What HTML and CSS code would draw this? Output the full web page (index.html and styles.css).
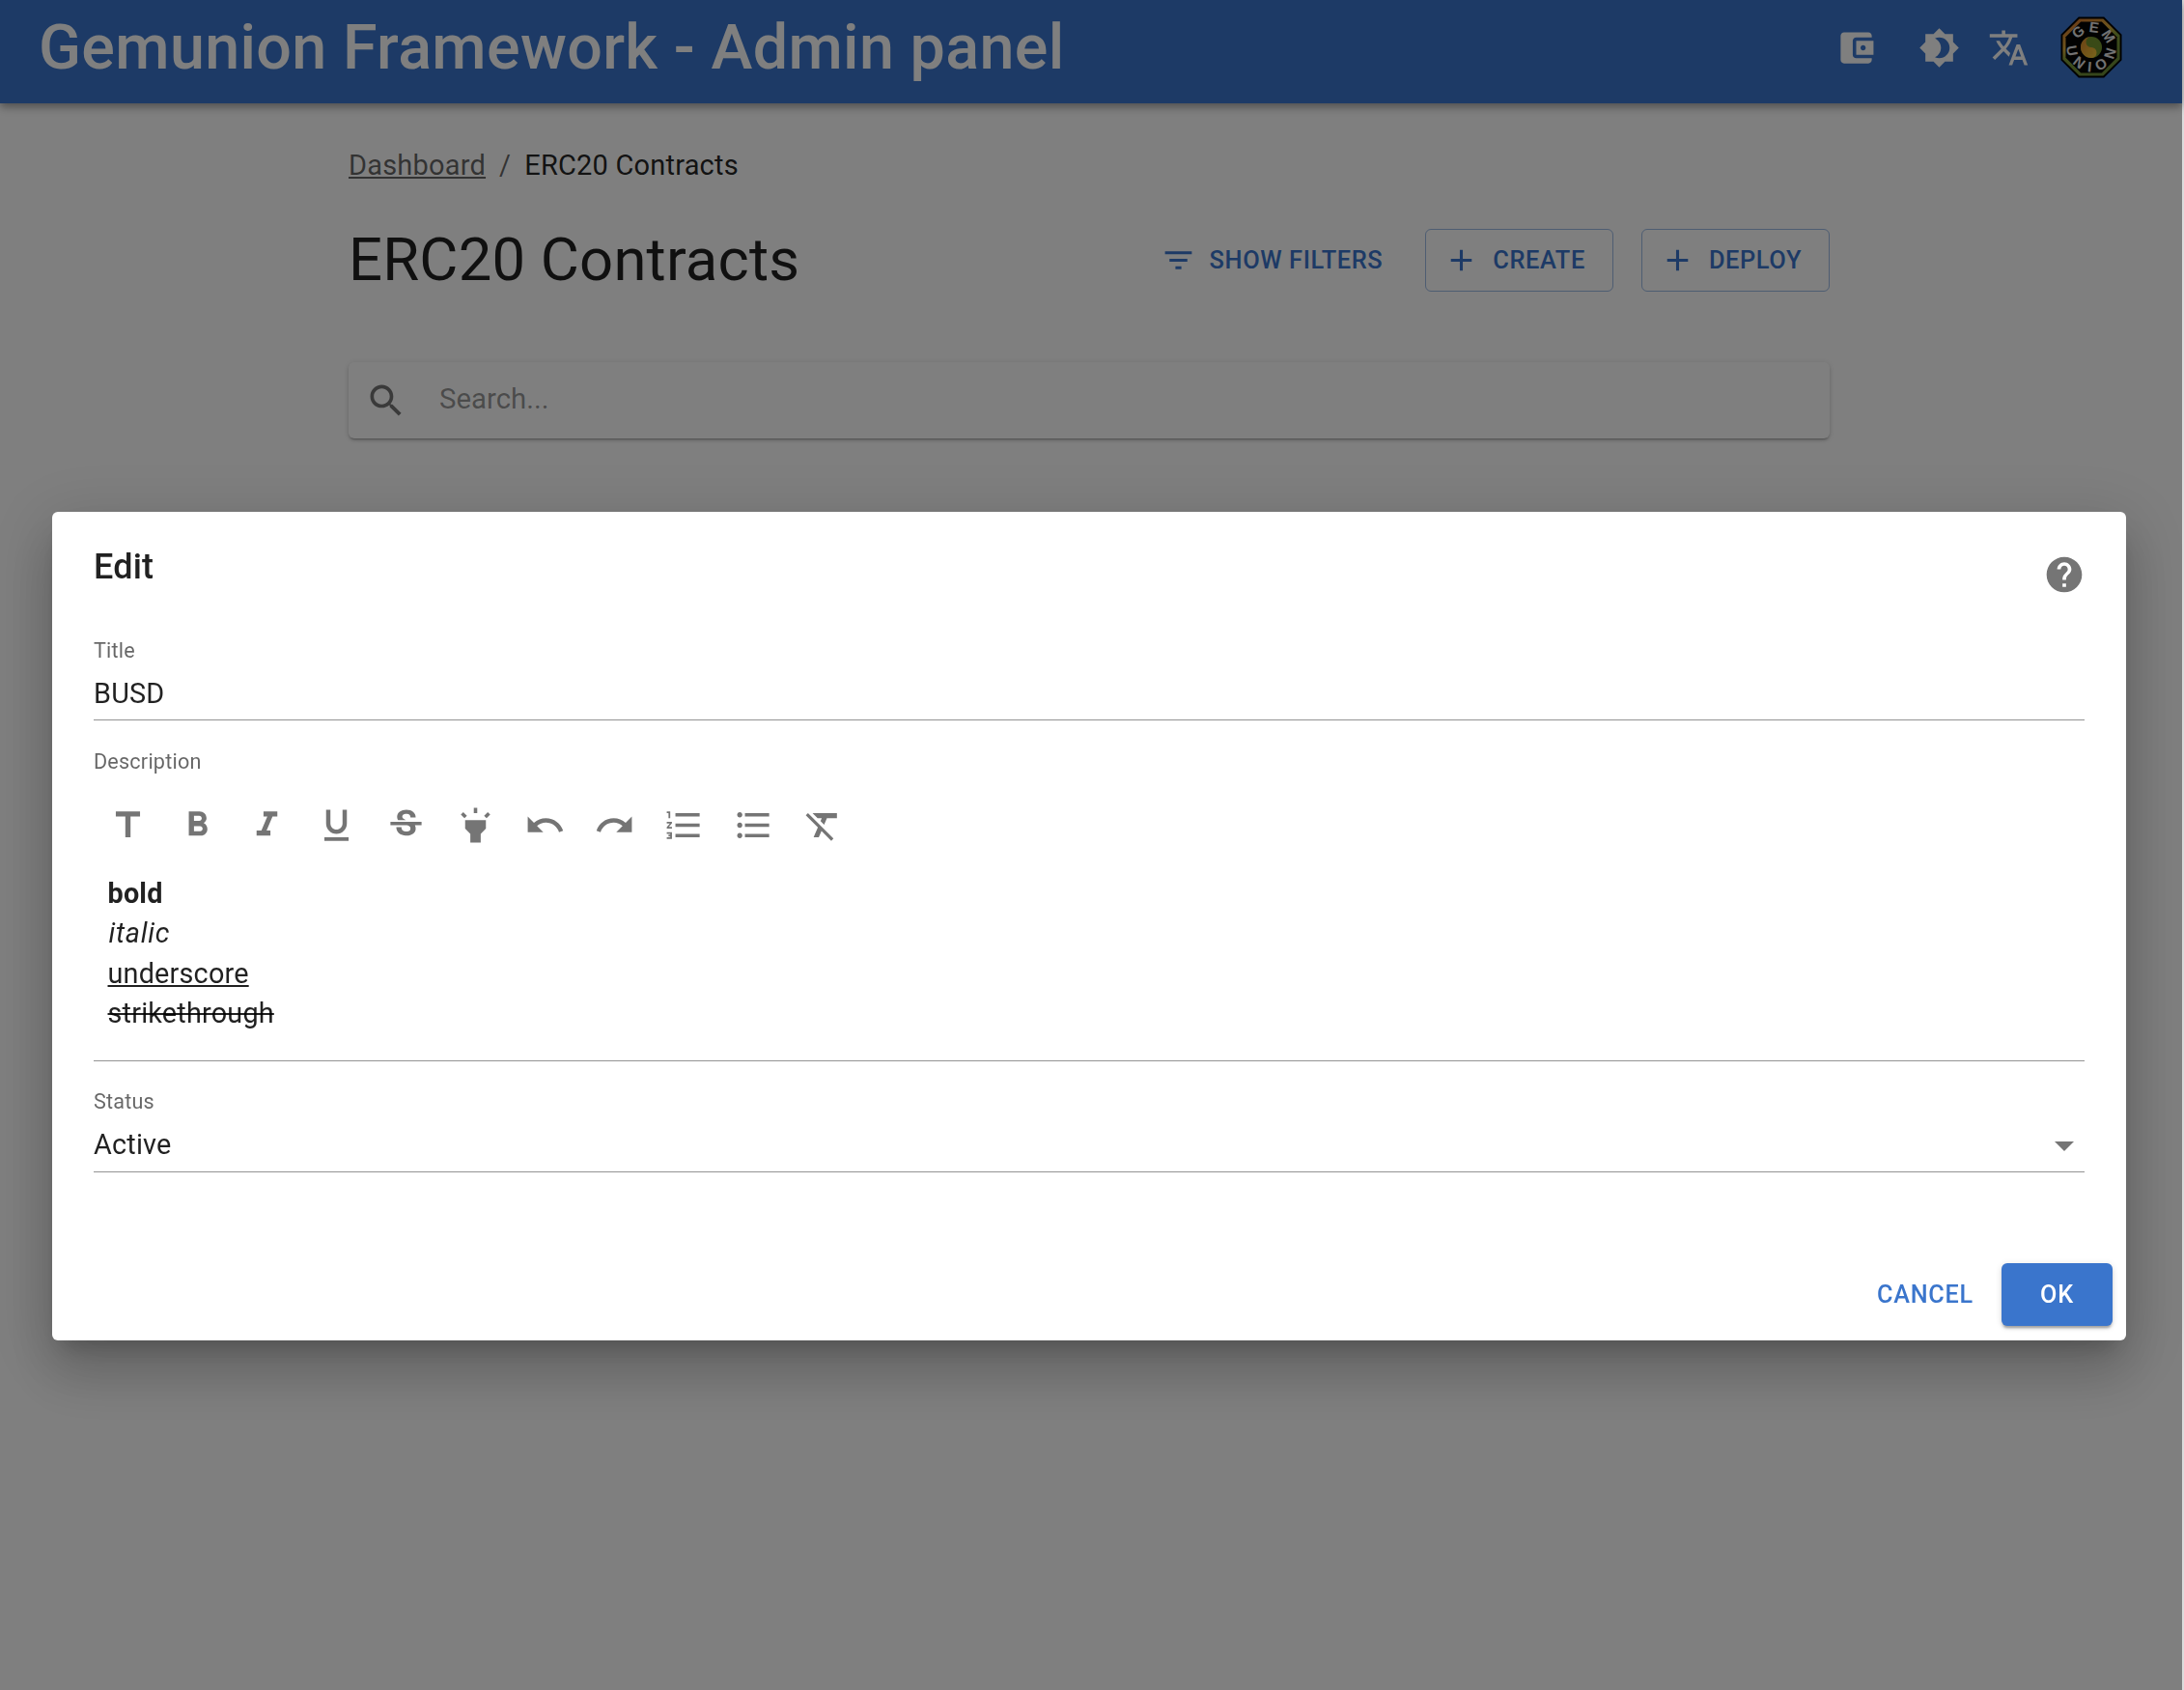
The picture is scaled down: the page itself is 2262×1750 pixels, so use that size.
FILE: index.html
```html
<!DOCTYPE html>
<html lang="en">
<head>
<meta charset="utf-8">
<title>ERC20 Contracts</title>
<link rel="stylesheet" href="styles.css">
</head>
<body>
<div class="page">
  <header class="appbar">
    <div class="brand">Gemunion Framework - Admin panel</div>
    <div class="appbar-icons">
      <svg class="ico hdr i-wallet" viewBox="0 0 24 24"><path d="M21 18v1c0 1.1-.9 2-2 2H5c-1.11 0-2-.9-2-2V5c0-1.1.89-2 2-2h14c1.1 0 2 .9 2 2v1h-9c-1.11 0-2 .9-2 2v8c0 1.1.89 2 2 2h9zm-9-2h10V8H12v8zm4-2.5c-.83 0-1.5-.67-1.5-1.5s.67-1.5 1.5-1.5 1.5.67 1.5 1.5-.67 1.5-1.5 1.5z"/></svg>
      <svg class="ico hdr i-bright" viewBox="0 0 24 24"><path d="M20 8.69V4h-4.69L12 .69 8.69 4H4v4.69L.69 12 4 15.31V20h4.69L12 23.31 15.31 20H20v-4.69L23.31 12 20 8.69zM12 18c-.89 0-1.74-.2-2.5-.55C11.56 16.5 13 14.42 13 12s-1.44-4.5-3.5-5.45C10.26 6.2 11.11 6 12 6c3.31 0 6 2.69 6 6s-2.69 6-6 6z"/></svg>
      <svg class="ico hdr i-lang" viewBox="0 0 24 24"><path d="M12.87 15.07l-2.54-2.51.03-.03c1.74-1.94 2.98-4.17 3.71-6.53H17V4h-7V2H8v2H1v1.99h11.17C11.5 7.92 10.44 9.75 9 11.35 8.07 10.32 7.3 9.19 6.69 8h-2c.73 1.63 1.73 3.17 2.98 4.56l-5.09 5.02L4 19l5-5 3.11 3.11.76-2.04zM18.5 10h-2L12 22h2l1.12-3h4.75L21 22h2l-4.5-12zm-2.62 7l1.62-4.33L19.12 17h-3.24z"/></svg>
      <svg class="logo" viewBox="0 0 64 64">
        <defs>
          <linearGradient id="rim" x1="0.1" y1="0" x2="0.6" y2="1">
            <stop offset="0" stop-color="#d2702c"/>
            <stop offset=".4" stop-color="#d9a93c"/>
            <stop offset=".55" stop-color="#7f9a38"/>
            <stop offset="1" stop-color="#6a8a36"/>
          </linearGradient>
          <linearGradient id="yin" x1="0" y1="0" x2="1" y2="1">
            <stop offset="0" stop-color="#d8832a"/>
            <stop offset="1" stop-color="#f2c838"/>
          </linearGradient>
          <path id="arc-top" d="M18 24.5 A16 16 0 0 1 48 32"/>
          <path id="arc-bottom" d="M6.6 31 A25.5 25.5 0 0 0 57.4 35"/>
        </defs>
        <polygon points="18.8,0.5 45.2,0.5 63.5,18.8 63.5,45.2 45.2,63.5 18.8,63.5 0.5,45.2 0.5,18.8" fill="#000"/>
        <polygon points="19.6,2.4 44.4,2.4 61.6,19.6 61.6,44.4 44.4,61.6 19.6,61.6 2.4,44.4 2.4,19.6" fill="url(#rim)"/>
        <polygon points="21.2,5.5 42.8,5.5 58.5,21.2 58.5,42.8 42.8,58.5 21.2,58.5 5.5,42.8 5.5,21.2" fill="#050505"/>
        <text class="logo-text"><textPath href="#arc-top" textLength="39" lengthAdjust="spacing">GEM</textPath></text>
        <text class="logo-text"><textPath href="#arc-bottom" textLength="78" lengthAdjust="spacing">UNION</textPath></text>
        <circle cx="32" cy="32" r="11" fill="#74952f"/>
        <path d="M32 21a11 11 0 0 0 0 22a5.5 5.5 0 0 0 0-11a5.5 5.5 0 0 1 0-11z" fill="url(#yin)"/>
        <circle cx="32" cy="26.5" r="1.7" fill="#74952f"/>
        <circle cx="32" cy="37.5" r="1.7" fill="#e6b232"/>
      </svg>
    </div>
  </header>

  <main class="content">
    <nav class="crumbs">
      <a class="crumb-link">Dashboard</a>
      <span class="crumb-sep">/</span>
      <span>ERC20 Contracts</span>
    </nav>
    <div class="title-row">
      <h1 class="page-title">ERC20 Contracts</h1>
      <div class="actions">
        <button class="btn btn-text"><svg class="ico btn-ico" viewBox="0 0 24 24"><path d="M10 18h4v-2h-4v2zM3 6v2h18V6H3zm3 7h12v-2H6v2z"/></svg>Show filters</button>
        <button class="btn btn-outline"><svg class="ico btn-ico" viewBox="0 0 24 24"><path d="M19 13h-6v6h-2v-6H5v-2h6V5h2v6h6v2z"/></svg>Create</button>
        <button class="btn btn-outline"><svg class="ico btn-ico" viewBox="0 0 24 24"><path d="M19 13h-6v6h-2v-6H5v-2h6V5h2v6h6v2z"/></svg>Deploy</button>
      </div>
    </div>
    <div class="search">
      <svg class="ico search-ico" viewBox="0 0 24 24"><path d="M15.5 14h-.79l-.28-.27C15.41 12.59 16 11.11 16 9.5 16 5.91 13.09 3 9.5 3S3 5.91 3 9.5 5.91 16 9.5 16c1.61 0 3.09-.59 4.23-1.57l.27.28v.79l5 4.99L20.49 19l-4.99-5zm-6 0C7.01 14 5 11.99 5 9.5S7.01 5 9.5 5 14 7.01 14 9.5 11.99 14 9.5 14z"/></svg>
      <span class="search-text">Search...</span>
    </div>
  </main>
</div>

<div class="backdrop"></div>

<section class="dialog">
  <div class="dialog-head">
    <h2 class="dialog-title">Edit</h2>
    <svg class="ico help" viewBox="0 0 24 24"><path d="M12 2C6.48 2 2 6.48 2 12s4.48 10 10 10 10-4.48 10-10S17.52 2 12 2zm1 17h-2v-2h2v2zm2.07-7.75l-.9.92C13.45 12.9 13 13.5 13 15h-2v-.5c0-1.1.45-2.1 1.17-2.83l1.24-1.26c.37-.36.59-.86.59-1.41 0-1.1-.9-2-2-2s-2 .9-2 2H8c0-2.21 1.79-4 4-4s4 1.79 4 4c0 .88-.36 1.68-.93 2.25z"/></svg>
  </div>
  <div class="field field-title">
    <div class="field-label">Title</div>
    <div class="field-value">BUSD</div>
  </div>
  <div class="field field-desc">
    <div class="field-label">Description</div>
    <div class="toolbar">
      <svg class="ico tool" viewBox="0 0 24 24"><path d="M5 4v3h5.5v12h3V7H19V4z"/></svg>
      <svg class="ico tool" viewBox="0 0 24 24"><path d="M15.6 10.79c.97-.67 1.65-1.77 1.65-2.79 0-2.26-1.75-4-4-4H7v14h7.04c2.09 0 3.71-1.7 3.71-3.79 0-1.52-.86-2.82-2.15-3.42zM10 6.5h3c.83 0 1.5.67 1.5 1.5s-.67 1.5-1.5 1.5h-3v-3zm3.5 9H10v-3h3.5c.83 0 1.5.67 1.5 1.5s-.67 1.5-1.5 1.5z"/></svg>
      <svg class="ico tool" viewBox="0 0 24 24"><path d="M10 4v3h2.21l-3.42 8H6v3h8v-3h-2.21l3.42-8H18V4z"/></svg>
      <svg class="ico tool" viewBox="0 0 24 24"><path d="M12 17c3.31 0 6-2.69 6-6V3h-2.5v8c0 1.93-1.57 3.5-3.5 3.5S8.5 12.93 8.5 11V3H6v8c0 3.31 2.69 6 6 6zm-7 2v2h14v-2H5z"/></svg>
      <svg class="ico tool" viewBox="0 0 24 24"><path d="M7.24 8.75c-.26-.48-.39-1.03-.39-1.67 0-.61.13-1.16.4-1.67.26-.5.63-.93 1.11-1.29.48-.35 1.05-.63 1.7-.83.66-.19 1.39-.29 2.18-.29.81 0 1.54.11 2.21.34.66.22 1.23.54 1.69.94.47.4.83.88 1.08 1.43.25.55.38 1.15.38 1.81h-3.01c0-.31-.05-.59-.15-.85-.09-.27-.24-.49-.44-.68-.2-.19-.45-.33-.75-.44-.3-.1-.66-.16-1.06-.16-.39 0-.74.04-1.03.13-.29.09-.53.21-.72.36-.19.16-.34.34-.44.55-.1.21-.15.43-.15.66 0 .48.25.88.74 1.21.38.25.77.48 1.41.7H7.39c-.05-.08-.11-.17-.15-.25zM21 12v-2H3v2h9.62c.18.07.4.14.55.2.37.17.66.34.87.51.21.17.35.36.43.57.07.2.11.43.11.69 0 .23-.05.45-.14.66-.09.2-.23.38-.42.53-.19.15-.42.26-.71.35-.29.08-.63.13-1.01.13-.43 0-.83-.04-1.18-.13s-.66-.23-.91-.42c-.25-.19-.45-.44-.59-.75-.14-.31-.25-.76-.25-1.21H6.4c0 .55.08 1.13.24 1.58.16.45.37.85.65 1.21.28.35.6.66.98.92.37.26.78.48 1.22.65.44.17.9.3 1.38.39.48.08.96.13 1.44.13.8 0 1.53-.09 2.18-.28s1.21-.45 1.67-.79c.46-.34.82-.77 1.07-1.27s.38-1.07.38-1.71c0-.6-.1-1.14-.31-1.61-.05-.11-.11-.23-.17-.33H21z"/></svg>
      <svg class="ico tool" viewBox="0 0 24 24"><path d="M6 14l3 3v5h6v-5l3-3V9H6v5zm5-12h2v3h-2V2zM3.5 5.875L4.914 4.46l2.12 2.122L5.62 7.997zm13.46.71l2.123-2.12 1.414 1.414L18.375 8z"/></svg>
      <svg class="ico tool" viewBox="0 0 24 24"><path d="M12.5 8c-2.65 0-5.05.99-6.9 2.6L2 7v9h9l-3.62-3.62c1.39-1.16 3.16-1.88 5.12-1.88 3.54 0 6.55 2.31 7.6 5.5l2.37-.78C21.08 11.03 17.15 8 12.5 8z"/></svg>
      <svg class="ico tool" viewBox="0 0 24 24"><path d="M18.4 10.6C16.55 8.99 14.15 8 11.5 8c-4.65 0-8.58 3.03-9.96 7.22L3.9 16c1.05-3.19 4.05-5.5 7.6-5.5 1.95 0 3.73.72 5.12 1.88L13 16h9V7l-3.6 3.6z"/></svg>
      <svg class="ico tool" viewBox="0 0 24 24"><path d="M2 17h2v.5H3v1h1v.5H2v1h3v-4H2v1zm1-9h1V4H2v1h1v3zm-1 3h1.8L2 13.1v.9h3v-1H3.2L5 10.9V10H2v1zm5-6v2h14V5H7zm0 14h14v-2H7v2zm0-6h14v-2H7v2z"/></svg>
      <svg class="ico tool" viewBox="0 0 24 24"><path d="M4 10.5c-.83 0-1.5.67-1.5 1.5s.67 1.5 1.5 1.5 1.5-.67 1.5-1.5-.67-1.5-1.5-1.5zm0-6c-.83 0-1.5.67-1.5 1.5S3.17 7.5 4 7.5 5.5 6.83 5.5 6 4.83 4.5 4 4.5zm0 12c-.83 0-1.5.68-1.5 1.5s.68 1.5 1.5 1.5 1.5-.68 1.5-1.5-.67-1.5-1.5-1.5zM7 19h14v-2H7v2zm0-6h14v-2H7v2zm0-8v2h14V5H7z"/></svg>
      <svg class="ico tool" viewBox="0 0 24 24"><path d="M3.27 5L2 6.27l6.97 6.97L6.5 19h3l1.57-3.66L16.73 21 18 19.73 3.55 5.27 3.27 5zM6 5v.18L8.82 8h2.4l-.72 1.68 2.1 2.1L14.21 8H20V5H6z"/></svg>
    </div>
    <div class="editor">
      <div class="t-bold">bold</div>
      <div class="t-italic">italic</div>
      <div class="t-under">underscore</div>
      <div class="t-strike">strikethrough</div>
    </div>
  </div>
  <div class="field field-status">
    <div class="field-label">Status</div>
    <div class="field-value select-value">Active<span class="caret"></span></div>
  </div>
  <div class="dialog-actions">
    <button class="dbtn dbtn-text">Cancel</button>
    <button class="dbtn dbtn-primary">OK</button>
  </div>
</section>
</body>
</html>
```

FILE: styles.css
```css
* { box-sizing: border-box; }
html, body { margin: 0; padding: 0; height: 100%; }
body {
  width: 2262px;
  height: 1750px;
  overflow: hidden;
  background: #dcdcdc;
  font-family: Roboto, "Liberation Sans", sans-serif;
  color: rgba(0, 0, 0, .87);
}
.page { height: 1750px; width: 2260px; background: #fff; }
.ico { display: block; fill: currentColor; flex: none; }

.appbar {
  height: 107px;
  background: #3a75cc;
  color: #fff;
  display: flex;
  align-items: center;
  justify-content: space-between;
  padding: 0 62px 0 40px;
  box-shadow: 0 3px 7px -1px rgba(0,0,0,.2), 0 6px 8px 0 rgba(0,0,0,.14), 0 1px 14px 0 rgba(0,0,0,.12);
}
.brand { font-size: 64.6px; font-weight: 500; line-height: 1; letter-spacing: .35px; padding-bottom: 9px; }
.appbar-icons { display: flex; align-items: center; padding-bottom: 9px; }
.hdr { width: 43px; height: 43px; }
.i-wallet { margin-right: 43px; }
.i-bright { margin-right: 29px; }
.i-lang { margin-right: 32.5px; }
.logo { width: 64px; height: 64px; display: block; }
.logo-text { font-family: "Liberation Sans", sans-serif; font-size: 15px; font-weight: 700; fill: #e4e4e4; }

.content { width: 1534px; margin-left: 361px; }
.crumbs {
  display: flex;
  align-items: center;
  height: 38px;
  margin-top: 45px;
  font-size: 29px;
  letter-spacing: .2px;
}
.crumb-link { color: rgba(0,0,0,.6); text-decoration: underline; }
.crumb-sep { color: rgba(0,0,0,.6); margin: 0 14px; }
.title-row { display: flex; align-items: center; justify-content: space-between; margin-top: 46px; height: 66px; }
.page-title { margin: 0; font-size: 61.6px; font-weight: 400; line-height: 1; letter-spacing: .2px; padding-top: 2px; }
.actions { display: flex; align-items: center; gap: 29px; }
.btn {
  display: flex; align-items: center;
  height: 65px;
  font: 500 25.4px Roboto, sans-serif;
  letter-spacing: .6px;
  text-transform: uppercase;
  color: #3a75cc;
  background: none;
  border-radius: 6px;
  padding: 0;
}
.btn-ico { width: 37px; height: 37px; margin-right: 14px; }
.btn-text { border: 0; padding: 0 15px 0 0; }
.btn-outline { border: 1.5px solid rgba(58,117,204,.5); padding: 0 28px 0 18px; }

.search {
  height: 79px;
  margin-top: 73px;
  display: flex; align-items: center;
  background: #fff;
  border-radius: 6px;
  padding: 0 17px;
  box-shadow: 0 3px 2px -2px rgba(0,0,0,.2), 0 2px 3px 0 rgba(0,0,0,.14), 0 1px 7px 0 rgba(0,0,0,.12);
}
.search-ico { width: 44px; height: 44px; color: rgba(0,0,0,.54); }
.search-text { margin-left: 33px; font-size: 29.4px; color: rgba(0,0,0,.42); padding-bottom: 3px; }

.backdrop { position: fixed; left: 0; top: 0; width: 2260px; height: 1750px; background: rgba(0,0,0,.5); }

.dialog {
  position: fixed;
  left: 54px; top: 530px;
  width: 2148px; height: 858px;
  background: #fff;
  border-radius: 6px;
  box-shadow: 0 16px 22px -10px rgba(0,0,0,.2), 0 35px 55px 4px rgba(0,0,0,.14), 0 13px 66px 12px rgba(0,0,0,.12);
  padding: 0 43px;
  display: flex; flex-direction: column;
}
.dialog-head { height: 133px; display: flex; justify-content: space-between; }
.dialog-title { margin: 29px 0 0; font-size: 36px; line-height: 1.6; font-weight: 500; letter-spacing: .2px; }
.help { width: 44px; height: 44px; color: rgba(0,0,0,.54); margin: 43px -1px 0 0; }

.field-label { font-size: 21.6px; line-height: 1; letter-spacing: .2px; color: rgba(0,0,0,.6); }
.field-value { font-size: 28.8px; line-height: 1; letter-spacing: .2px; }
.field-title { height: 83px; border-bottom: 1.5px solid rgba(0,0,0,.42); }
.field-title .field-value { margin-top: 19px; }
.field-desc { height: 353px; padding-top: 32px; border-bottom: 1.5px solid rgba(0,0,0,.42); }
.toolbar { display: flex; align-items: center; margin: 33px 0 0 -1px; }
.tool { width: 43px; height: 43px; color: rgba(0,0,0,.54); margin: 0 14.5px; }
.editor { margin-top: 29px; padding-left: 14.5px; font-size: 28.8px; line-height: 41.5px; letter-spacing: .2px; }
.t-bold { font-weight: 700; }
.t-italic { font-style: italic; padding-left: 1px; letter-spacing: .7px; }
.t-under { text-decoration: underline; }
.t-strike { text-decoration: line-through; }
.field-status { height: 115px; padding-top: 31px; border-bottom: 1.5px solid rgba(0,0,0,.42); }
.select-value { position: relative; margin-top: 19px; }
.caret {
  position: absolute; right: 11px; top: 11px;
  border-left: 10px solid transparent;
  border-right: 10px solid transparent;
  border-top: 10px solid rgba(0,0,0,.54);
}
.dialog-actions { display: flex; justify-content: flex-end; align-items: center; gap: 29px; margin: 94px -29px 0 0; }
.dbtn { font: 500 25.2px Roboto, sans-serif; letter-spacing: .8px; text-transform: uppercase; border: 0; height: 65px; border-radius: 6px; padding: 0; }
.dbtn-text { background: none; color: #3a75cc; }
.dbtn-primary {
  width: 115px;
  background: #3a75cc; color: #fff;
  box-shadow: 0 4px 2px -2px rgba(0,0,0,.2), 0 3px 3px 0 rgba(0,0,0,.14), 0 1px 7px 0 rgba(0,0,0,.12);
  text-transform: none;
}
```
